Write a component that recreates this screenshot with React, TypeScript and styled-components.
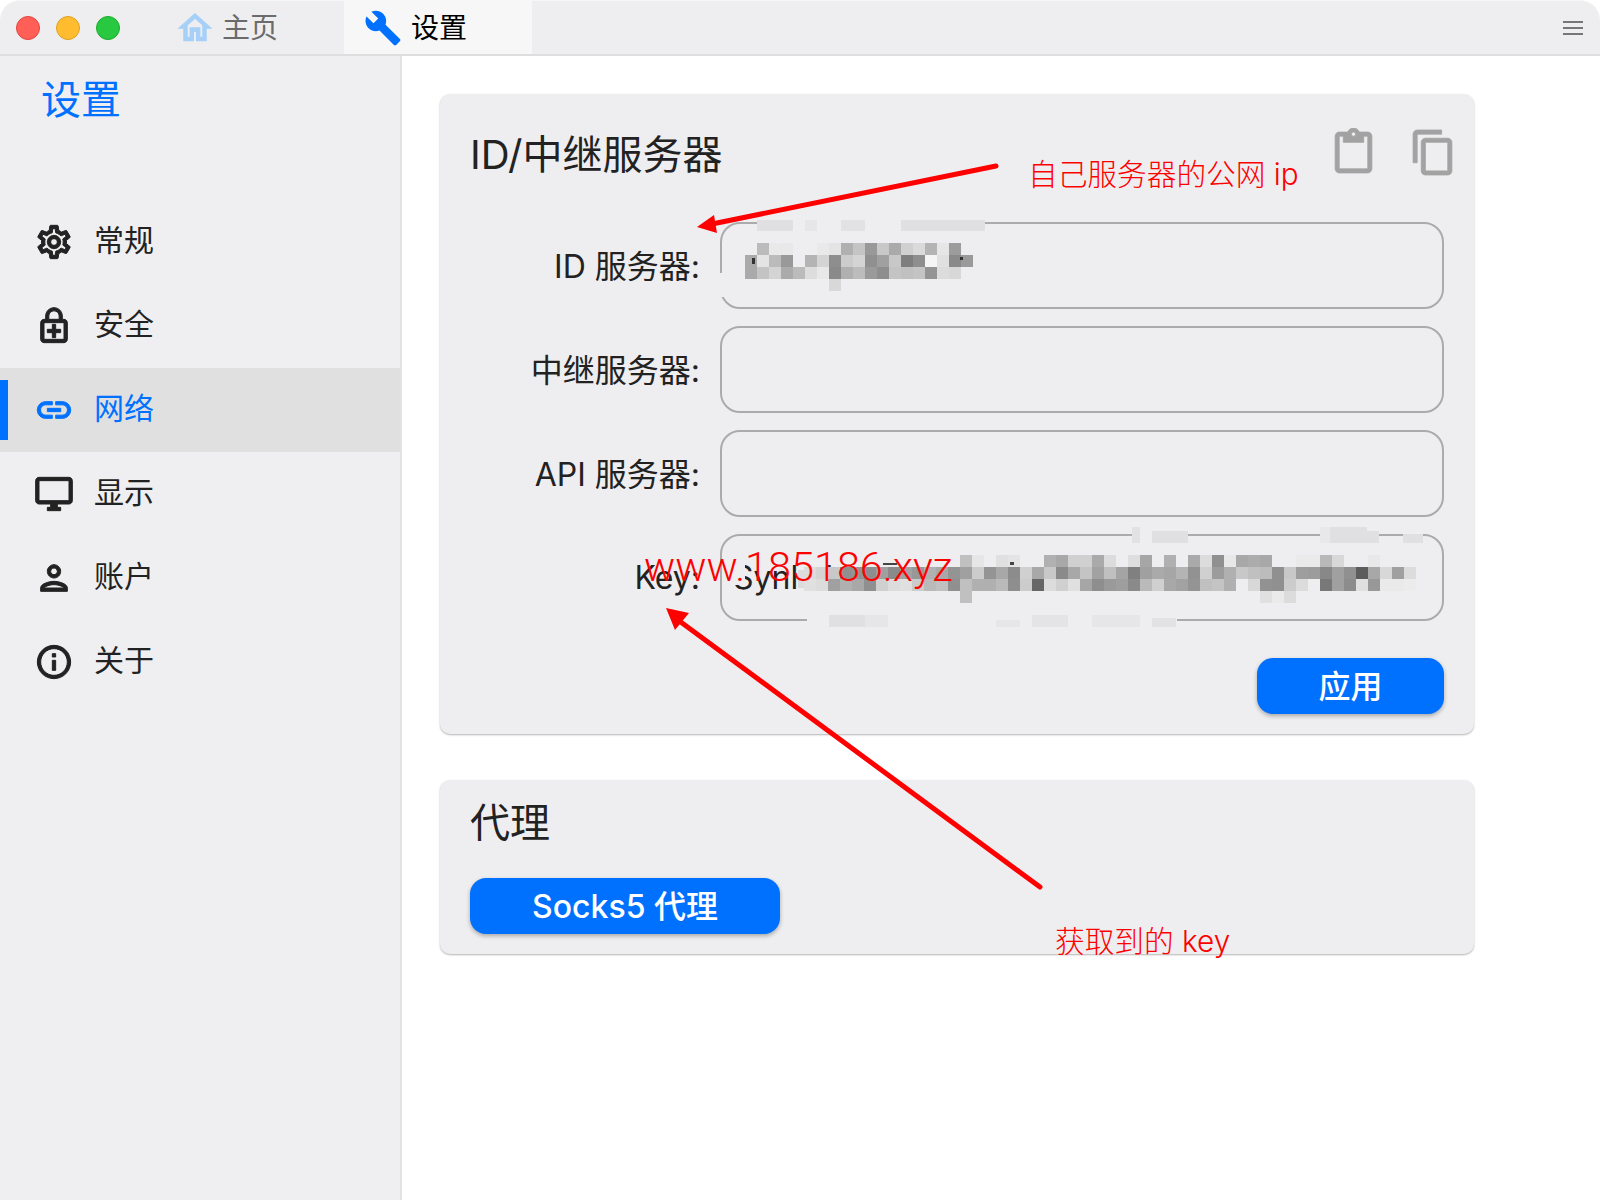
import { createGlobalStyle, styled } from 'styled-components';
import {
  MdBuild,
  MdContentCopy,
  MdContentPaste,
  MdInfoOutline,
  MdLink,
  MdOutlineDesktopWindows,
  MdOutlineEnhancedEncryption,
  MdOutlineHome,
  MdOutlinePerson,
  MdOutlineSettings,
} from 'react-icons/md';

const blue = '#0071ff';
const panel = '#eeeef0';
const ink = '#222222';

const GlobalStyle = createGlobalStyle`
  html, body {
    margin: 0;
    padding: 0;
    background: #ffffff;
  }
  body {
    font-family: Inter, "Noto Sans CJK SC", sans-serif;
    color: ${ink};
  }
`;

const Window = styled.div`
  position: relative;
  width: 1600px;
  height: 1200px;
  display: flex;
  flex-direction: column;
  overflow: hidden;
  background: #ffffff;
`;

const TitleBar = styled.header`
  height: 56px;
  box-sizing: border-box;
  display: flex;
  align-items: stretch;
  flex-shrink: 0;
  background: ${panel};
  border-top: 1px solid #f6f6f7;
  border-bottom: 2px solid #dedede;
  border-radius: 20px 20px 0 0;
`;

const Lights = styled.div`
  width: 160px;
  padding-left: 16px;
  box-sizing: border-box;
  display: flex;
  align-items: center;
  gap: 16px;
`;

const Light = styled.span<{ $fill: string; $edge: string }>`
  width: 24px;
  height: 24px;
  box-sizing: border-box;
  border-radius: 50%;
  background: ${(props) => props.$fill};
  border: 1px solid ${(props) => props.$edge};
`;

const Tab = styled.div<{ $active?: boolean }>`
  width: ${(props) => (props.$active ? '188px' : '184px')};
  box-sizing: border-box;
  padding-left: ${(props) => (props.$active ? '20px' : '16px')};
  display: flex;
  align-items: center;
  gap: ${(props) => (props.$active ? '9px' : '8px')};
  font-size: 28px;
  background: ${(props) => (props.$active ? '#f7f7f8' : 'transparent')};
  color: ${(props) => (props.$active ? '#000000' : '#6b6b6b')};

  svg {
    color: ${(props) => (props.$active ? blue : '#a6d0f8')};
  }

  svg path:not([fill='none']) {
    stroke: ${(props) => (props.$active ? 'none' : '#a6d0f8')};
    stroke-width: 0.8;
  }
`;

const TabLabel = styled.span`
  padding-bottom: 4px;
`;

const MenuButton = styled.div`
  margin-left: auto;
  width: 20px;
  margin-right: 17px;
  display: flex;
  flex-direction: column;
  justify-content: center;
  gap: 4px;

  span {
    height: 2px;
    background: #777777;
  }
`;

const Body = styled.div`
  flex: 1;
  display: flex;
  min-height: 0;
`;

const Sidebar = styled.aside`
  width: 400px;
  flex-shrink: 0;
  background: #efeff1;
  border-right: 2px solid #e2e2e2;
`;

const SidebarTitle = styled.h1`
  height: 144px;
  margin: 0;
  padding: 18px 0 0 41px;
  box-sizing: border-box;
  font-size: 40px;
  line-height: 52px;
  font-weight: 400;
  color: ${blue};
`;

const NavItem = styled.div<{ $active?: boolean }>`
  position: relative;
  height: 84px;
  padding-left: 34px;
  display: flex;
  align-items: center;
  gap: 20px;
  font-size: 30px;
  background: ${(props) => (props.$active ? '#e0e0e0' : 'transparent')};
  color: ${(props) => (props.$active ? blue : ink)};

  svg path:not([fill='none']) {
    stroke: currentColor;
    stroke-width: 0.6;
  }

  &::before {
    content: '';
    display: ${(props) => (props.$active ? 'block' : 'none')};
    position: absolute;
    left: 0;
    top: 12px;
    width: 8px;
    height: 60px;
    background: ${blue};
  }
`;

const NavLabel = styled.span`
  padding-bottom: 8px;
`;

const Content = styled.main`
  flex: 1;
  padding: 38px 0 0 38px;
  display: flex;
  flex-direction: column;
  gap: 46px;
`;

const Card = styled.section`
  width: 1034px;
  box-sizing: border-box;
  padding: 0 30px 20px;
  background: ${panel};
  border-radius: 10px;
  box-shadow: 0 1px 2px rgba(0, 0, 0, 0.3);
`;

const CardHeader = styled.div`
  height: 128px;
  display: flex;
  align-items: flex-start;
  justify-content: space-between;
`;

const CardTitle = styled.h2`
  margin: 0;
  padding-top: 32px;
  font-size: 40px;
  line-height: 58px;
  font-weight: 400;
`;

const ProxyTitle = styled(CardTitle)`
  padding-top: 14px;
  padding-bottom: 26px;
`;

const HeaderIcons = styled.div`
  margin-right: -14px;
  padding-top: 34px;
  display: flex;
  gap: 31px;
  color: #a2a2a2;

  svg path:not([fill='none']) {
    stroke: currentColor;
    stroke-width: 0.4;
  }
`;

const Fields = styled.div`
  display: flex;
  flex-direction: column;
  gap: 17px;
`;

const Field = styled.label`
  display: flex;
  align-items: center;
  gap: 20px;
`;

const FieldLabel = styled.span<{ $latin?: boolean }>`
  width: 230px;
  flex-shrink: 0;
  padding-bottom: ${(props) => (props.$latin ? '0' : '4px')};
  text-align: right;
  font-size: 32px;
`;

const FieldInput = styled.input`
  width: 724px;
  height: 87px;
  flex-shrink: 0;
  box-sizing: border-box;
  padding: 0 11px;
  border: 2px solid #ababab;
  border-radius: 20px;
  background: transparent;
  outline: none;
  font-family: inherit;
  font-size: 32px;
  color: ${ink};
`;

const Actions = styled.div`
  margin-top: 37px;
  display: flex;
  justify-content: flex-end;
`;

const PrimaryButton = styled.button<{ $width: number }>`
  width: ${(props) => props.$width}px;
  height: 56px;
  padding: 0 0 4px;
  border: none;
  border-radius: 16px;
  background: ${blue};
  color: #ffffff;
  font-family: inherit;
  font-size: 32px;
  font-weight: 500;
  box-shadow: 0 2px 4px rgba(0, 0, 0, 0.3);
`;

const Overlay = styled.svg`
  position: absolute;
  left: 0;
  top: 0;
  pointer-events: none;
`;

const Note = styled.div<{ $x: number; $y: number; $size: number }>`
  position: absolute;
  left: ${(props) => props.$x}px;
  top: ${(props) => props.$y}px;
  font-size: ${(props) => props.$size}px;
  line-height: 1.2;
  font-weight: 300;
  color: #ff0000;
  white-space: nowrap;
`;

const Watermark = styled(Note)`
  font-family: Roboto, 'Liberation Sans', sans-serif;
`;

const navItems = [
  { label: '常规', Icon: MdOutlineSettings },
  { label: '安全', Icon: MdOutlineEnhancedEncryption },
  { label: '网络', Icon: MdLink, active: true },
  { label: '显示', Icon: MdOutlineDesktopWindows },
  { label: '账户', Icon: MdOutlinePerson },
  { label: '关于', Icon: MdInfoOutline },
];

const fields = [
  { label: 'ID 服务器:', value: '' },
  { label: '中继服务器:', value: '' },
  { label: 'API 服务器:', value: '' },
  { label: 'Key:', value: 'Synl   h', latin: true },
];

// blurred text in the screenshot: grey cells, 12px each
const mosaics = [
  { x: 745, y: 243, cells: ['', 'bb', 'e9', 'e8', '', '', 'e9', 'e4', 'b0', 'c4', '99', 'c8', 'aa', 'd0', 'da', 'b4', 'e6', '9c'] },
  { x: 745, y: 255, cells: ['aa', 'e4', 'bb', '99', '', 'b4', 'd4', '8e', 'cc', 'd4', '90', 'a0', 'c8', '7e', '8e', 'f5', 'e0', '8a', '9a'] },
  { x: 745, y: 267, cells: ['aa', 'c4', 'd4', 'ab', 'bb', 'dd', 'e8', '8a', 'b0', 'bc', '9a', '8e', 'c4', 'c0', 'c4', '94', 'dc', 'd8'] },
  { x: 745, y: 279, cells: ['', '', '', '', '', '', '', 'd8'] },
  { x: 960, y: 555, cells: ['c0', 'e6', '', 'e0', 'e4', '', '', 'b0', 'a8', 'd0', 'd0', 'aa', 'dc', '', 'de', 'a6', '', 'b0', '', 'aa', 'dc', '90', 'e8', 'a8', 'ac', 'a8', '', '', 'ea', 'ea', 'b8', 'd8', '', '', 'e8'] },
  { x: 804, y: 567, cells: ['dc', 'd4', 'c8', '90', '94', '8e', 'a0', '8a', 'a2', '98', 'b0', 'a8', '94', 'a0', 'cc', '94', 'a8', '8c', 'd0', 'a8', 'c8', '8a', 'a8', 'c4', 'a2', 'c0', 'a4', '80', 'a0', 'aa', 'a6', 'b4', '92', 'd0', '9c', 'b0', 'c8', 'c0', 'bc', '90', 'c8', '9e', '9c', '88', 'a0', '90', '5c', 'a8', 'd8', 'a0', 'dc'] },
  { x: 804, y: 579, cells: ['e0', 'dc', 'a0', 'b0', 'a8', '90', 'd0', 'dc', 'e0', 'cc', 'ba', 'c0', '90', 'c0', 'b0', 'b0', 'ba', '8e', 'cc', '66', 'dc', 'd0', 'e0', 'a6', '8e', '9a', '9e', '8a', 'ba', 'd0', 'a8', 'a2', '94', 'c0', 'c4', 'b0', '', 'd8', '92', '90', 'cc', 'dc', '', '78', 'a0', '8c', 'e0', '98', 'ea', 'ea', 'ec'] },
  { x: 960, y: 591, cells: ['c0', '', '', '', '', '', '', '', '', '', '', '', '', '', '', '', '', '', '', '', '', '', '', '', '', 'e0', 'ea', 'dc'] },
];

// smudges left around the blur, some of them over the field borders
const patches = [
  { x: 757, y: 220, w: 36, h: 11, c: '#e0e0e2' },
  { x: 793, y: 220, w: 12, h: 11, c: panel },
  { x: 805, y: 220, w: 12, h: 11, c: '#e6e6e8' },
  { x: 817, y: 220, w: 24, h: 11, c: panel },
  { x: 841, y: 220, w: 24, h: 11, c: '#e2e2e4' },
  { x: 865, y: 218, w: 36, h: 13, c: panel },
  { x: 901, y: 220, w: 84, h: 11, c: '#e0e0e2' },
  { x: 719, y: 273, w: 6, h: 24, c: panel },
  { x: 1132, y: 527, w: 8, h: 16, c: '#e2e2e4' },
  { x: 1140, y: 527, w: 12, h: 16, c: panel },
  { x: 1152, y: 531, w: 36, h: 12, c: '#e0e0e2' },
  { x: 1320, y: 527, w: 10, h: 16, c: '#e8e8ea' },
  { x: 1330, y: 527, w: 37, h: 16, c: '#e0e0e2' },
  { x: 1367, y: 531, w: 12, h: 12, c: '#e0e0e2' },
  { x: 1403, y: 534, w: 20, h: 9, c: '#e0e0e2' },
  { x: 798, y: 570, w: 6, h: 18, c: '#dcdcde' },
  { x: 807, y: 618, w: 370, h: 6, c: panel },
  { x: 829, y: 615, w: 36, h: 12, c: '#e0e0e2' },
  { x: 865, y: 615, w: 23, h: 12, c: '#e6e6e8' },
  { x: 996, y: 620, w: 24, h: 7, c: '#e6e6e8' },
  { x: 1032, y: 615, w: 36, h: 12, c: '#e4e4e6' },
  { x: 1092, y: 615, w: 48, h: 12, c: '#e6e6e8' },
  { x: 1152, y: 618, w: 24, h: 9, c: '#e2e2e4' },
];

const App = () => (
  <>
    <GlobalStyle />
    <Window>
      <TitleBar>
        <Lights>
          <Light $fill="#ff5f57" $edge="#e0443e" />
          <Light $fill="#febc2e" $edge="#dea123" />
          <Light $fill="#28c840" $edge="#1aab29" />
        </Lights>
        <Tab>
          <MdOutlineHome size={38} />
          <TabLabel>主页</TabLabel>
        </Tab>
        <Tab $active>
          <MdBuild size={38} />
          <TabLabel>设置</TabLabel>
        </Tab>
        <MenuButton>
          <span />
          <span />
          <span />
        </MenuButton>
      </TitleBar>
      <Body>
        <Sidebar>
          <SidebarTitle>设置</SidebarTitle>
          {navItems.map(({ label, Icon, active }) => (
            <NavItem key={label} $active={active}>
              <Icon size={40} />
              <NavLabel>{label}</NavLabel>
            </NavItem>
          ))}
        </Sidebar>
        <Content>
          <Card>
            <CardHeader>
              <CardTitle>ID/中继服务器</CardTitle>
              <HeaderIcons>
                <MdContentPaste size={49} />
                <MdContentCopy size={49} />
              </HeaderIcons>
            </CardHeader>
            <Fields>
              {fields.map((field) => (
                <Field key={field.label}>
                  <FieldLabel $latin={field.latin}>{field.label}</FieldLabel>
                  <FieldInput readOnly value={field.value} />
                </Field>
              ))}
            </Fields>
            <Actions>
              <PrimaryButton $width={187}>应用</PrimaryButton>
            </Actions>
          </Card>
          <Card>
            <ProxyTitle>代理</ProxyTitle>
            <PrimaryButton $width={310}>Socks5 代理</PrimaryButton>
          </Card>
        </Content>
      </Body>

      <Overlay width="1600" height="1200" viewBox="0 0 1600 1200">
        <rect x="722" y="555" width="23" height="30" fill={panel} />
        {patches.map((p) => (
          <rect key={`${p.x}-${p.y}`} x={p.x} y={p.y} width={p.w} height={p.h} fill={p.c} />
        ))}
        {mosaics.map((row) =>
          row.cells.map((cell, i) =>
            cell ? (
              <rect
                key={`${row.x}-${row.y}-${i}`}
                x={row.x + i * 12}
                y={row.y}
                width="12"
                height="12"
                fill={`#${cell}${cell}${cell}`}
              />
            ) : null,
          ),
        )}
        <rect x="752" y="258" width="3" height="6" fill="#333333" />
        <rect x="960" y="257" width="3" height="3" fill="#333333" />
        <rect x="883" y="563" width="14" height="2" fill="#444444" />
        <rect x="1010" y="562" width="4" height="3" fill="#444444" />
        <line x1="996" y1="166" x2="712" y2="224" stroke="#ff0000" strokeWidth="5" strokeLinecap="round" />
        <polygon points="697,227 714,215 717,233" fill="#ff0000" />
        <line x1="1040" y1="887" x2="678" y2="620" stroke="#ff0000" strokeWidth="5" strokeLinecap="round" />
        <polygon points="666,608 689,613 675,630" fill="#ff0000" />
      </Overlay>
      <Note $x={1028} $y={157} $size={29.7}>自己服务器的公网 ip</Note>
      <Watermark $x={644} $y={543} $size={41.4}>www.185186.xyz</Watermark>
      <Note $x={1055} $y={924} $size={29.7}>获取到的 key</Note>
    </Window>
  </>
);

export default App;
